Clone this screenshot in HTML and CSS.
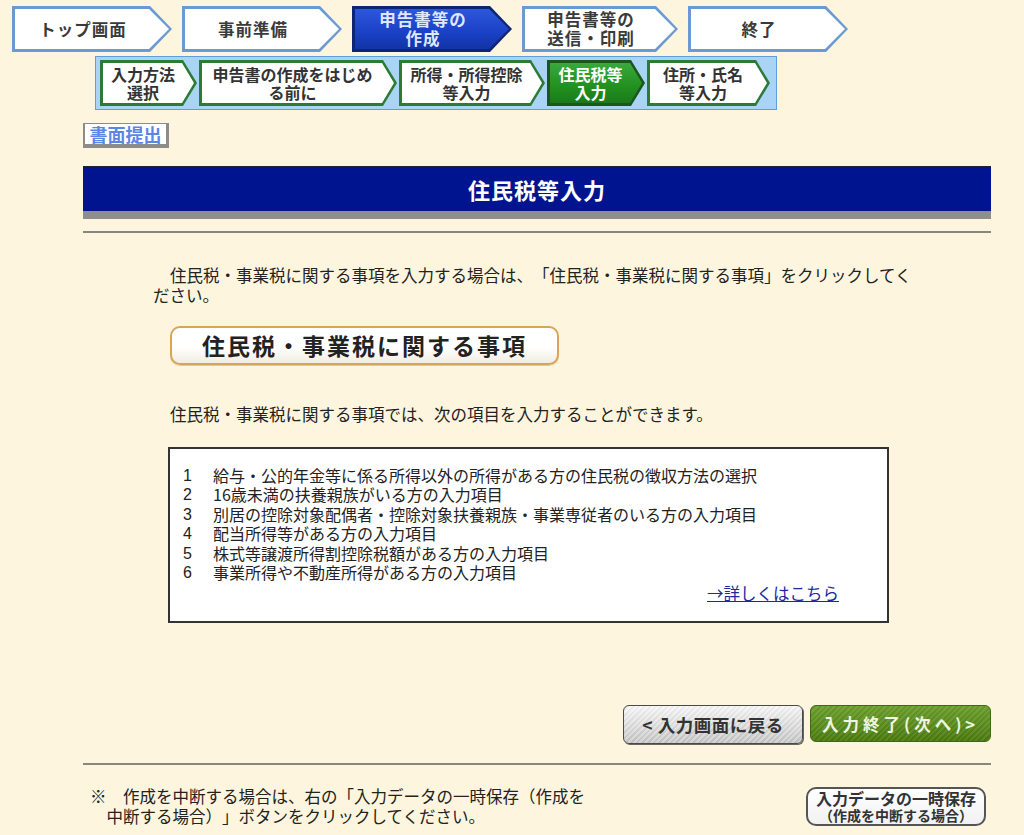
FILE: index.html
```html
<!DOCTYPE html>
<html lang="ja">
<head>
<meta charset="utf-8">
<title>住民税等入力</title>
<link rel="stylesheet" href="styles.css">
</head>
<body>
<nav class="steps">
  <div class="step w160"><div class="step-in">トップ画面</div></div>
  <div class="step w160"><div class="step-in">事前準備</div></div>
  <div class="step w160 is-active"><div class="step-in">申告書等の<br>作成</div></div>
  <div class="step w156"><div class="step-in">申告書等の<br>送信・印刷</div></div>
  <div class="step w160"><div class="step-in">終了</div></div>
</nav>
<div class="substeps">
  <div class="sub s1"><div class="sub-in">入力方法<br>選択</div></div>
  <div class="sub s2"><div class="sub-in">申告書の作成をはじめ<br>る前に</div></div>
  <div class="sub s3"><div class="sub-in">所得・所得控除<br>等入力</div></div>
  <div class="sub s4 is-active"><div class="sub-in">住民税等<br>入力</div></div>
  <div class="sub s5"><div class="sub-in">住所・氏名<br>等入力</div></div>
</div>

<main class="content">
  <div class="submit-tag">書面提出</div>
  <h1 class="title">住民税等入力</h1>
  <hr class="rule">

  <p class="lead">住民税・事業税に関する事項を入力する場合は、「住民税・事業税に関する事項」をクリックしてください。</p>
  <button class="item-btn">住民税・事業税に関する事項</button>
  <p class="lead lead2">住民税・事業税に関する事項では、次の項目を入力することができます。</p>

  <div class="infobox">
    <ol class="items">
      <li><span class="num">1</span><span>給与・公的年金等に係る所得以外の所得がある方の住民税の徴収方法の選択</span></li>
      <li><span class="num">2</span><span>16歳未満の扶養親族がいる方の入力項目</span></li>
      <li><span class="num">3</span><span>別居の控除対象配偶者・控除対象扶養親族・事業専従者のいる方の入力項目</span></li>
      <li><span class="num">4</span><span>配当所得等がある方の入力項目</span></li>
      <li><span class="num">5</span><span>株式等譲渡所得割控除税額がある方の入力項目</span></li>
      <li><span class="num">6</span><span>事業所得や不動産所得がある方の入力項目</span></li>
    </ol>
    <div class="more"><a href="#">→詳しくはこちら</a></div>
  </div>

  <div class="actions">
    <button class="btn-back">&lt; 入力画面に戻る</button>
    <button class="btn-next">入力終了(次へ)&gt;</button>
  </div>
  <hr class="rule rule2">

  <div class="footer">
    <p class="note">※　作成を中断する場合は、右の「入力データの一時保存（作成を中断する場合）」ボタンをクリックしてください。</p>
    <button class="btn-save"><span class="l1">入力データの一時保存</span><span class="l2">（作成を中断する場合）</span></button>
  </div>
</main>
</body>
</html>
```

FILE: styles.css
```css
html, body {
  margin: 0;
  padding: 0;
}
body {
  background: #fdf5dd;
  font-family: "Noto Sans CJK JP", "Liberation Sans", sans-serif;
  color: #222;
  padding-top: 6px;
  width: 1024px;
  min-height: 835px;
  box-sizing: border-box;
  text-spacing-trim: space-all;
}

/* ---- top steps ---- */
.steps {
  display: flex;
  gap: 10px;
  margin-left: 12px;
}
.step {
  height: 46px;
  padding: 3px;
  box-sizing: border-box;
  background: #6b9ad2;
  clip-path: polygon(0 0, calc(100% - 22px) 0, 100% 50%, calc(100% - 22px) 100%, 0 100%);
}
.w160 { width: 160px; }
.w156 { width: 156px; }
.step-in {
  height: 100%;
  background: #fff;
  clip-path: polygon(0 0, calc(100% - 20px) 0, 100% 50%, calc(100% - 20px) 100%, 0 100%);
  display: flex;
  align-items: center;
  justify-content: center;
  text-align: center;
  padding-right: 18px;
  font-size: 16.5px;
  font-weight: bold;
  line-height: 19px;
  letter-spacing: 1px;
  color: #3a3a3a;
}
.step.is-active { background: #0e2576; }
.step.is-active .step-in {
  background: linear-gradient(#2d58dc, #1a40c4 60%, #1334a6);
  color: #dfe8ff;
}

/* ---- sub steps ---- */
.substeps {
  display: flex;
  gap: 2px;
  margin: 4px 0 0 95px;
  width: 682px;
  box-sizing: border-box;
  padding: 3px 6px 3px 4px;
  border: 1px solid #5d9fdc;
  background: #a9d4f6;
}
.sub {
  height: 46px;
  padding: 3px;
  box-sizing: border-box;
  background: #2b7a35;
  clip-path: polygon(0 0, calc(100% - 14px) 0, 100% 50%, calc(100% - 14px) 100%, 0 100%);
}
.s1 { width: 97px; }
.s2 { width: 198px; }
.s3 { width: 146px; }
.s4 { width: 98px; }
.s5 { width: 123px; }
.sub-in {
  height: 100%;
  background: #fff;
  clip-path: polygon(0 0, calc(100% - 12px) 0, 100% 50%, calc(100% - 12px) 100%, 0 100%);
  display: flex;
  align-items: center;
  justify-content: center;
  text-align: center;
  padding-right: 11px;
  font-size: 16px;
  font-weight: bold;
  line-height: 18.5px;
  color: #333;
  white-space: nowrap;
}
.sub.is-active { background: #1b561d; }
.sub.is-active .sub-in {
  background: linear-gradient(#3aa83c, #22901f 60%, #1a7a1a);
  color: #fff;
}

/* ---- content ---- */
.content {
  margin-left: 83px;
  width: 908px;
}
.submit-tag {
  margin-top: 13px;
  width: 86px;
  height: 25px;
  box-sizing: border-box;
  border-style: solid;
  border-color: #8c8c8c;
  border-width: 1px 3px 4px 2px;
  background: #fff;
  color: #5a86e6;
  font-size: 18px;
  font-weight: bold;
  line-height: 20px;
  text-align: center;
}
.title {
  margin: 18px 0 0;
  height: 53px;
  box-sizing: border-box;
  background: #00148f;
  border-top: 1px solid #223;
  border-bottom: 8px solid #8e8e8e;
  color: #fff;
  font-size: 22px;
  font-weight: bold;
  letter-spacing: 1px;
  line-height: 44px;
  text-align: center;
}
.rule {
  margin: 12px 0 0;
  border: 0;
  height: 2px;
  background: #87877c;
}
.lead {
  margin: 32px 0 0 70px;
  width: 772px;
  font-size: 16.5px;
  line-height: 20px;
  text-indent: 17px;
  color: #222;
}
.lead2 { margin-top: 39px; }
.item-btn {
  display: block;
  margin: 21px 0 0 87px;
  width: 389px;
  height: 39px;
  border: 2px solid #d8a458;
  border-radius: 10px;
  background: linear-gradient(#ffffff, #ffffff 55%, #f2ede2);
  box-shadow: 0 1px 0 #e8c890;
  font-family: inherit;
  font-size: 23px;
  font-weight: bold;
  letter-spacing: 2px;
  color: #222;
  line-height: 33px;
  padding: 0;
}

.infobox {
  margin: 23px 0 0 85px;
  width: 721px;
  height: 176px;
  box-sizing: border-box;
  border: 2px solid #333;
  background: #fff;
  padding: 17px 48px 0 13px;
}
.items {
  list-style: none;
  margin: 0;
  padding: 0;
  font-size: 16px;
  line-height: 19.4px;
  color: #222;
}
.items li {
  display: flex;
}
.num {
  width: 30px;
  flex: none;
  font-family: "Liberation Sans", sans-serif;
}
.more {
  text-align: right;
  font-size: 16.5px;
  line-height: 20px;
  margin-top: 1px;
}
.more a {
  color: #1b2aa0;
  text-decoration: underline;
}

.actions {
  margin-top: 82px;
  display: flex;
  justify-content: flex-end;
  gap: 7px;
}
.btn-back, .btn-next {
  height: 39px;
  width: 180px;
  border-radius: 6px;
  font-family: inherit;
  font-weight: bold;
  padding: 0;
}
.btn-back {
  border: 1px solid #4a4a4a;
  background:
    repeating-linear-gradient(135deg, rgba(255,255,255,0.25) 0 2px, rgba(0,0,0,0.03) 2px 4px),
    linear-gradient(#f6f6f6, #d9d9d9 60%, #c4c4c4);
  box-shadow: 1px 1px 0 #666;
  color: #333;
  font-size: 17.5px;
  letter-spacing: 0.5px;
}
.btn-next {
  width: 181px;
  height: 37px;
  border: 1px solid #3f6a10;
  background:
    repeating-linear-gradient(135deg, rgba(255,255,255,0.08) 0 2px, rgba(0,0,0,0.03) 2px 4px),
    linear-gradient(#6c9e2c, #5a8c1c 55%, #4a7812);
  color: #eef5e0;
  font-size: 16.5px;
  letter-spacing: 4px;
}
.rule2 { margin-top: 19px; }

.footer {
  display: flex;
  justify-content: space-between;
  align-items: flex-start;
  margin-top: 21px;
}
.note {
  margin: 0 0 0 7px;
  width: 484px;
  font-size: 16.5px;
  line-height: 20px;
  padding-left: 16.5px;
  text-indent: -16.5px;
  color: #222;
}
.btn-save {
  margin: 1px 5px 0 0;
  width: 180px;
  height: 39px;
  box-sizing: border-box;
  border: 2px solid #555;
  border-radius: 10px;
  background: linear-gradient(#ffffff, #f1f1f1);
  color: #333;
  font-family: inherit;
  font-weight: bold;
  padding: 0;
  display: flex;
  flex-direction: column;
  align-items: center;
  justify-content: center;
}
.btn-save .l1 { font-size: 16px; line-height: 17px; }
.btn-save .l2 { font-size: 14px; line-height: 16px; }
```
